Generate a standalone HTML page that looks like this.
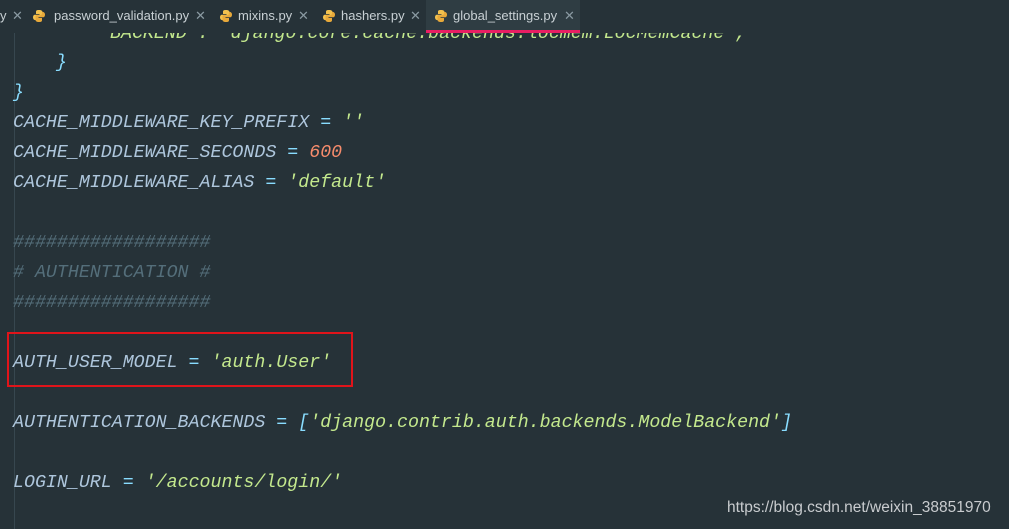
<!DOCTYPE html>
<html><head><meta charset="utf-8"><style>
body{margin:0;width:1009px;height:529px;background:#263238;overflow:hidden;position:relative;font-family:"Liberation Mono",monospace}
.tabs{position:absolute;left:0;top:0;width:1009px;height:33px;background:#263238;font-family:"Liberation Sans",sans-serif;font-size:13px;color:#c8d0d4;z-index:2}
.t{position:absolute;top:0;height:31px;line-height:31px;white-space:nowrap}
.x{color:#8a9aa2}
.ic{position:absolute;top:9px;width:14px;height:14px}
.active{position:absolute;left:426px;top:0;width:154px;height:30px;background:#2f3d43;border-bottom:3px solid #e91e63}
.code{position:absolute;left:13px;top:2px;font-style:italic;font-size:18.3px;color:#aec6dc;white-space:pre}
.l{position:absolute;left:0;height:30px;line-height:30px}
.s{color:#c3e88d}.o{color:#89ddff}.n{color:#f78c6c}.c{color:#546e7a}
.gut{position:absolute;left:14px;top:33px;width:1px;height:496px;background:#37474f}
.box{position:absolute;left:7px;top:332px;width:342px;height:51px;border:2px solid #e0141a}
.wm{position:absolute;left:727px;top:499px;font-family:"Liberation Sans",sans-serif;font-size:15.5px;color:#c9cccf}
</style></head><body>
<div class="gut"></div>
<div class="code">
<div class="l s" style="top:17px;left:97px">BACKEND': 'django.core.cache.backends.locmem.LocMemCache',</div>
<div class="l o" style="top:46px;left:43px">}</div>
<div class="l o" style="top:76px;left:0">}</div>
<div class="l" style="top:106px">CACHE_MIDDLEWARE_KEY_PREFIX <span class="o">=</span> <span class="s">''</span></div>
<div class="l" style="top:136px">CACHE_MIDDLEWARE_SECONDS <span class="o">=</span> <span class="n">600</span></div>
<div class="l" style="top:166px">CACHE_MIDDLEWARE_ALIAS <span class="o">=</span> <span class="s">'default'</span></div>
<div class="l c" style="top:226px">##################</div>
<div class="l c" style="top:256px"># AUTHENTICATION #</div>
<div class="l c" style="top:286px">##################</div>
<div class="l" style="top:346px">AUTH_USER_MODEL <span class="o">=</span> <span class="s">'auth.User'</span></div>
<div class="l" style="top:406px">AUTHENTICATION_BACKENDS <span class="o">=</span> <span class="o">[</span><span class="s">'django.contrib.auth.backends.ModelBackend'</span><span class="o">]</span></div>
<div class="l" style="top:466px">LOGIN_URL <span class="o">=</span> <span class="s">'/accounts/login/'</span></div>
</div>
<div class="box"></div>
<svg width="0" height="0" style="position:absolute"><defs><g id="py"><path d="M7 1C4 1 4 2 4 3v2h3.5v.7H3C1.5 5.7 1 7 1 8.5S2 11 3 11h1V9.5C4 8.5 5 7.7 6 7.7h3c1 0 1.5-.6 1.5-1.5V3C10.5 2 9.5 1 7 1z" fill="#f2c14e"/><path d="M7 13c3 0 3-1 3-2V9H6.5v-.7H11c1.5 0 2-1.3 2-2.8S12 3 11 3h-1v1.5c0 1-1 1.8-2 1.8H5c-1 0-1.5.6-1.5 1.5V11c0 1 1 2 3.5 2z" fill="#e8a93a"/></g></defs></svg>
<div class="tabs">
<div class="active"></div>
<div class="t" style="left:0">y</div><div class="t x" style="left:12px">✕</div>
<svg class="ic" style="left:32px" viewBox="0 0 14 14"><use href="#py"/></svg>
<div class="t" style="left:54px">password_validation.py</div><div class="t x" style="left:195px">✕</div>
<svg class="ic" style="left:219px" viewBox="0 0 14 14"><use href="#py"/></svg>
<div class="t" style="left:238px">mixins.py</div><div class="t x" style="left:298px">✕</div>
<svg class="ic" style="left:322px" viewBox="0 0 14 14"><use href="#py"/></svg>
<div class="t" style="left:341px">hashers.py</div><div class="t x" style="left:410px">✕</div>
<svg class="ic" style="left:434px" viewBox="0 0 14 14"><use href="#py"/></svg>
<div class="t" style="left:453px">global_settings.py</div><div class="t x" style="left:564px">✕</div>
</div>
<div class="wm">https://blog.csdn.net/weixin_38851970</div>
</body></html>
